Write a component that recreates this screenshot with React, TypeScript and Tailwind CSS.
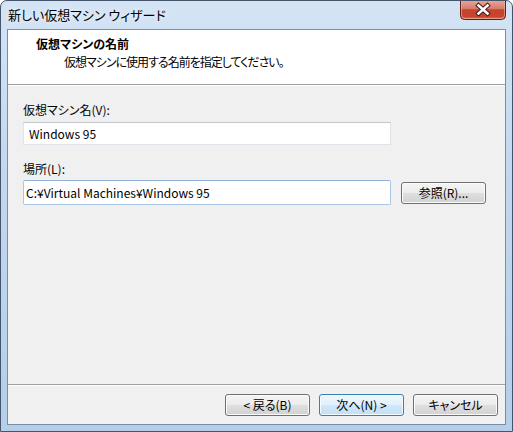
import React from "react";

const jp = "font-['Noto_Sans_CJK_JP','Noto_Sans',sans-serif] [font-feature-settings:'palt']";

function WinButton({ label, primary }: { label: string; primary?: boolean }) {
  return (
    <button
      className={
        primary
          ? "h-[22px] w-[85px] rounded-[3px] border border-[#3c7fb1] bg-[linear-gradient(#eef7fe_0%,#e1f0fc_50%,#cfe7fa_50%,#c2e0f8_100%)] shadow-[inset_0_0_0_1px_#f4faff] text-[12px] leading-[16px] text-black"
          : "h-[22px] w-[85px] rounded-[3px] border border-[#707070] bg-[linear-gradient(#f4f4f4_0%,#ececec_50%,#dfdfdf_50%,#d2d2d2_100%)] shadow-[inset_0_0_0_1px_#fbfbfb] text-[12px] leading-[16px] text-black"
      }
    >
      {label}
    </button>
  );
}

function CloseButton() {
  return (
    <svg width="46" height="20" viewBox="0 0 46 20" className="absolute top-[-1px] right-[6px]">
      <defs>
        <linearGradient id="cb" x1="0" y1="0" x2="0" y2="1">
          <stop offset="0" stopColor="#e9a99b" />
          <stop offset="0.45" stopColor="#d77a6b" />
          <stop offset="0.5" stopColor="#c7412f" />
          <stop offset="0.85" stopColor="#c9442f" />
          <stop offset="1" stopColor="#e2885f" />
        </linearGradient>
      </defs>
      <path d="M0.5 0 V15.5 Q0.5 19.5 4.5 19.5 H41.5 Q45.5 19.5 45.5 15.5 V0" fill="url(#cb)" stroke="#5a2019" />
      <path d="M1.5 0 V15 Q1.5 18.5 5 18.5 H41 Q44.5 18.5 44.5 15 V0" fill="none" stroke="#f0b5a4" strokeOpacity="0.6" />
      <g strokeLinecap="square">
        <path d="M18.5 5.5 L27.5 13.5 M27.5 5.5 L18.5 13.5" stroke="#4a1d18" strokeWidth="4.6" />
        <path d="M18.5 5.5 L27.5 13.5 M27.5 5.5 L18.5 13.5" stroke="#ffffff" strokeWidth="2.6" />
      </g>
    </svg>
  );
}

export default function App() {
  return (
    <div className={`${jp} relative flex h-[432px] w-[513px] flex-col overflow-hidden rounded-t-[7px] border border-[#44546a] bg-[linear-gradient(180deg,#d4e4f5_0%,#c2d8ef_40%,#b5cee9_100%)] px-[6px] pb-[6px] text-black`}>
      <div className="flex h-[28px] items-center pl-[1px] text-[13px] leading-[16px] [text-shadow:0_0_6px_#ffffff]">
        新しい仮想マシン ウィザード
      </div>
      <CloseButton />

      <div className="flex flex-1 flex-col border border-[#7c8ea4] bg-[#f0f0f0]">
        <div className="h-[55px] border-b border-[#a0a0a0] bg-white pl-[28px] pt-[6px]">
          <div className="text-[12px] font-bold leading-[16px]">仮想マシンの名前</div>
          <div className="mt-[2px] pl-[28px] text-[12px] leading-[16px] tracking-[-1px]">仮想マシンに使用する名前を指定してください。</div>
        </div>

        <div className="flex flex-1 flex-col border-t border-white px-[15px] pt-[16px]">
          <div className="text-[12px] leading-[16px]">仮想マシン名(V):</div>
          <input
            readOnly
            defaultValue="Windows 95"
            className="mt-[4px] h-[23px] w-[368px] border border-[#e2e3ea] border-t-[#c5c7ce] bg-white px-[5px] text-[12px] leading-[16px] outline-none"
          />
          <div className="mt-[16px] text-[12px] leading-[16px]">場所(L):</div>
          <div className="mt-[3px] flex items-center gap-[10px]">
            <input
              readOnly
              defaultValue="C:¥Virtual Machines¥Windows 95"
              className="h-[25px] w-[368px] rounded-[2px] border border-[#a9c7e6] border-t-[#8fb3d8] bg-white px-[2px] text-[12px] leading-[16px] outline-none"
            />
            <WinButton label="参照(R)..." />
          </div>
        </div>

        <div className="flex h-[40px] items-center justify-end gap-[9px] border-t border-[#a0a0a0] pr-[7px] shadow-[inset_0_1px_0_#ffffff]">
          <WinButton label="< 戻る(B)" />
          <WinButton label="次へ(N) >" primary />
          <WinButton label="キャンセル" />
        </div>
      </div>
    </div>
  );
}
